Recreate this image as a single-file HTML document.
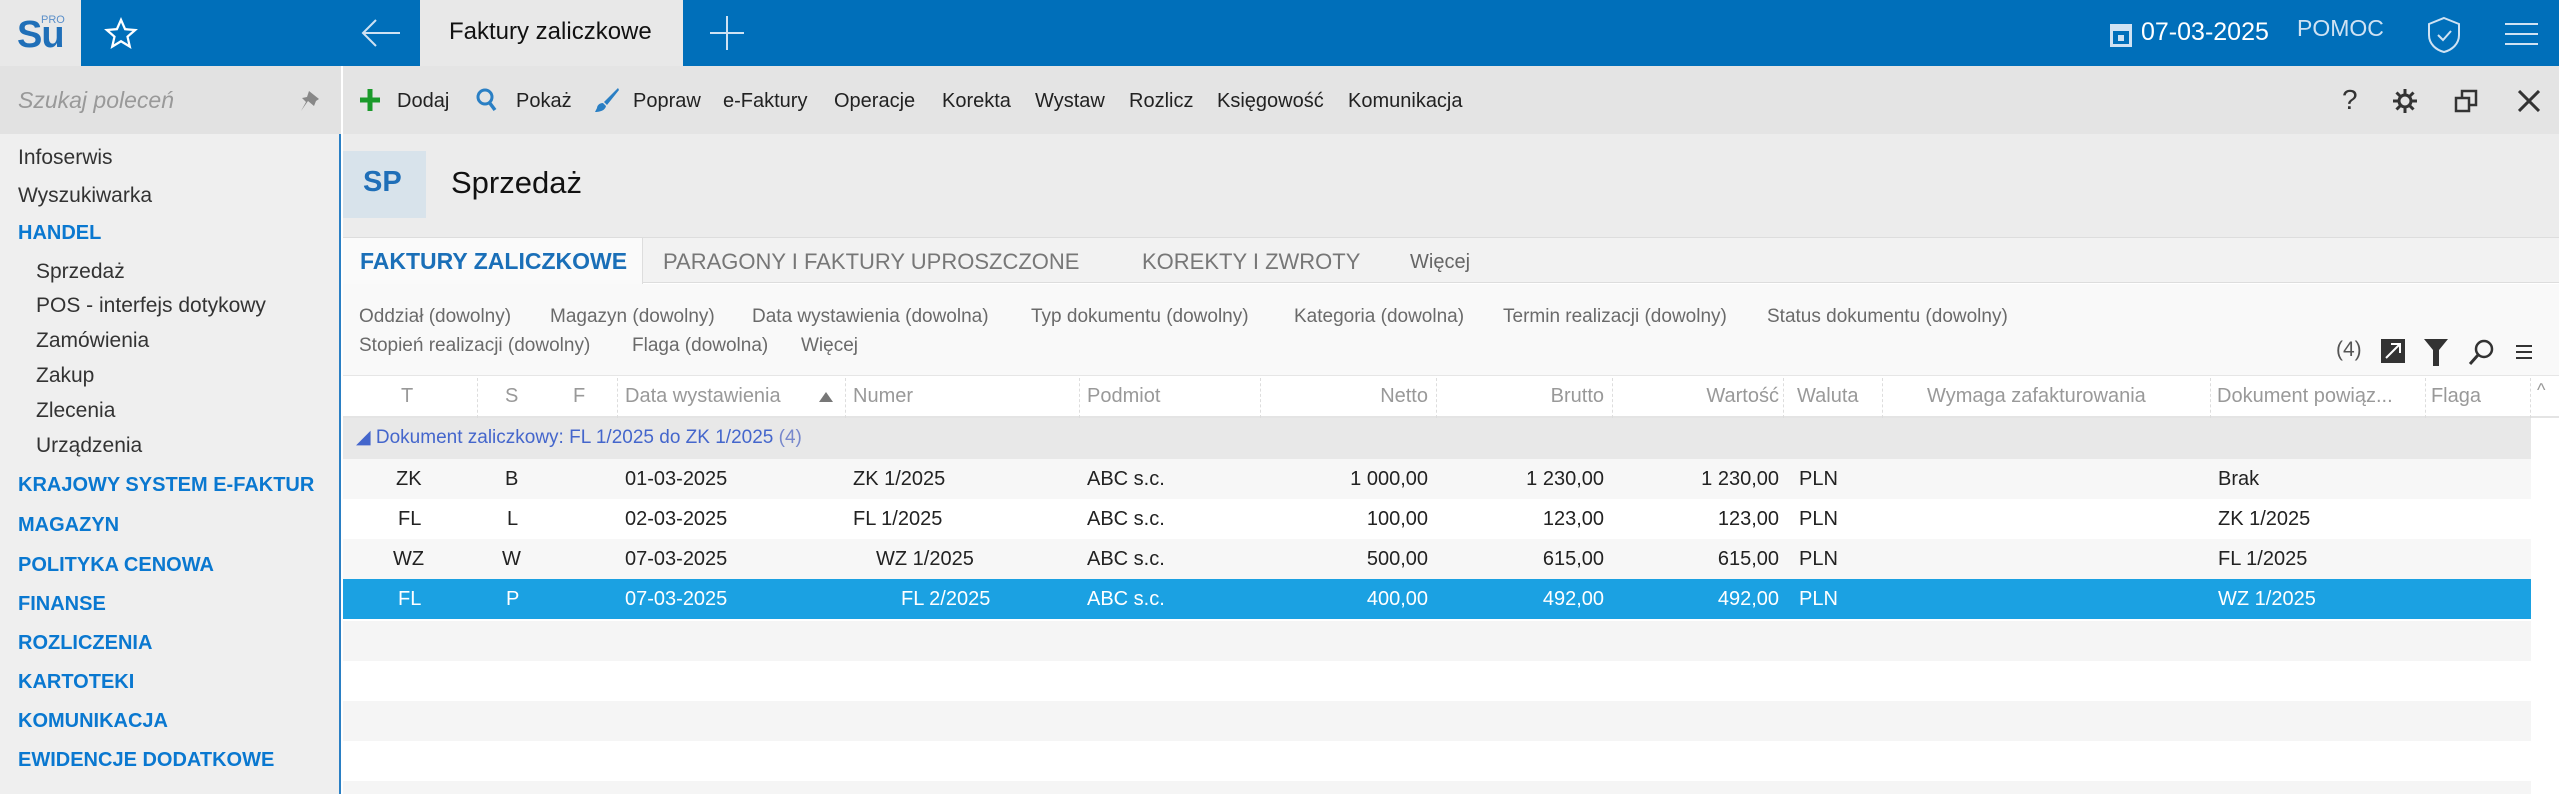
<!DOCTYPE html>
<html><head><meta charset="utf-8"><style>
*{margin:0;padding:0;box-sizing:border-box}
body{width:2559px;height:794px;overflow:hidden;position:relative;font-family:"Liberation Sans",sans-serif;background:#fff;color:#222}
.a{position:absolute;white-space:nowrap}
.top{left:0;top:0;width:2559px;height:66px;background:#006fba}
.sb{left:0;top:66px;width:341px;height:728px;background:#efefef;border-right:2px solid #2a7fc4}
.si{left:18px;font-size:21px;color:#333}
.sh{left:18px;font-size:20px;color:#0a78d0;font-weight:bold}
.sub{left:36px}
.tb{font-size:20px;color:#222;top:90px}
.fl{font-size:19px;color:#6a6a6a}
.hd{font-size:20px;color:#999;top:385px}
.c{font-size:20px;line-height:40px;height:40px}
.sep{position:absolute;top:378px;height:40px;border-left:1px dashed #ddd}
</style></head><body>
<div class="a top"></div>
<div class="a" style="left:0;top:0;width:81px;height:66px;background:#e8e8e8"></div>
<div class="a" style="left:17px;top:14px;font-size:38px;color:#1f6fb8;font-weight:bold;letter-spacing:-1px">Su</div>
<div class="a" style="left:41px;top:14px;font-size:11px;color:#5b8fc9">PRO</div>
<svg class="a" style="left:104px;top:17px" width="34" height="34" viewBox="0 0 24 24"><path d="M12 2l2.9 6.6 7.1.6-5.4 4.7 1.6 7-6.2-3.8-6.2 3.8 1.6-7L2 9.2l7.1-.6z" fill="none" stroke="#fff" stroke-width="1.6"/></svg>
<svg class="a" style="left:360px;top:16px" width="42" height="34" viewBox="0 0 42 34"><path d="M40 17H4M16 4L3 17l13 13" fill="none" stroke="#cfe2f3" stroke-width="2"/></svg>
<div class="a" style="left:420px;top:0;width:263px;height:66px;background:#e8e8e8"></div>
<div class="a" style="left:449px;top:18px;font-size:24px;color:#111">Faktury zaliczkowe</div>
<svg class="a" style="left:710px;top:16px" width="34" height="34"><path d="M17 0v34M0 17h34" stroke="#cfe2f3" stroke-width="2"/></svg>
<svg class="a" style="left:2109px;top:22px" width="24" height="26"><rect x="1" y="2" width="22" height="23" fill="#cfe2f3"/><rect x="4" y="9" width="16" height="13" fill="#006fba"/><rect x="9" y="13" width="6" height="6" fill="#cfe2f3"/></svg>
<div class="a" style="left:2141px;top:18px;font-size:25px;color:#fff">07-03-2025</div>
<div class="a" style="left:2297px;top:15px;font-size:23px;color:#cfe2f3">POMOC</div>
<svg class="a" style="left:2426px;top:16px" width="36" height="38" viewBox="0 0 36 38"><path d="M18 2l15 6v11c0 9-7 15-15 17C10 34 3 28 3 19V8z" fill="none" stroke="#cfe2f3" stroke-width="2"/><path d="M12 19l5 5 8-9" fill="none" stroke="#cfe2f3" stroke-width="2"/></svg>
<svg class="a" style="left:2505px;top:22px" width="33" height="24"><path d="M0 2h33M0 12h33M0 22h33" stroke="#cfe2f3" stroke-width="2"/></svg>

<div class="a sb"></div>
<div class="a" style="left:0;top:66px;width:341px;height:68px;background:#e2e2e2"></div>
<div class="a" style="left:18px;top:87px;font-size:23px;color:#999;font-style:italic">Szukaj poleceń</div>
<svg class="a" style="left:300px;top:90px" width="20" height="22" viewBox="0 0 20 22"><path d="M9 1l10 8-3 2-2 5-6-5-7 10 5-9-4-4 5-1z" fill="#888"/></svg>
<div class="a si" style="top:146px">Infoserwis</div>
<div class="a si" style="top:184px">Wyszukiwarka</div>
<div class="a sh" style="top:222px">HANDEL</div>
<div class="a si sub" style="top:260px">Sprzedaż</div>
<div class="a si sub" style="top:294px">POS - interfejs dotykowy</div>
<div class="a si sub" style="top:329px">Zamówienia</div>
<div class="a si sub" style="top:364px">Zakup</div>
<div class="a si sub" style="top:399px">Zlecenia</div>
<div class="a si sub" style="top:434px">Urządzenia</div>
<div class="a sh" style="top:474px">KRAJOWY SYSTEM E-FAKTUR</div>
<div class="a sh" style="top:514px">MAGAZYN</div>
<div class="a sh" style="top:554px">POLITYKA CENOWA</div>
<div class="a sh" style="top:593px">FINANSE</div>
<div class="a sh" style="top:632px">ROZLICZENIA</div>
<div class="a sh" style="top:671px">KARTOTEKI</div>
<div class="a sh" style="top:710px">KOMUNIKACJA</div>
<div class="a sh" style="top:749px">EWIDENCJE DODATKOWE</div>

<div class="a" style="left:343px;top:66px;width:2216px;height:68px;background:#e4e4e4"></div>
<svg class="a" style="left:360px;top:89px" width="20" height="22"><path d="M10 0v22M0 11h20" stroke="#1a9a2a" stroke-width="5"/></svg>
<div class="a tb" style="left:397px">Dodaj</div>
<svg class="a" style="left:476px;top:88px" width="22" height="24"><circle cx="9" cy="9" r="7" fill="none" stroke="#2a7fc4" stroke-width="3"/><path d="M13 14l6 8" stroke="#2a7fc4" stroke-width="3.5"/></svg>
<div class="a tb" style="left:516px">Pokaż</div>
<svg class="a" style="left:594px;top:87px" width="26" height="26"><path d="M24 1L10 15l3 3L25 3zM9 16c-4 0-6 3-6 5l-2 4c4 0 10-1 11-6z" fill="#2a7fc4"/></svg>
<div class="a tb" style="left:633px">Popraw</div>
<div class="a tb" style="left:723px">e-Faktury</div>
<div class="a tb" style="left:834px">Operacje</div>
<div class="a tb" style="left:942px">Korekta</div>
<div class="a tb" style="left:1035px">Wystaw</div>
<div class="a tb" style="left:1129px">Rozlicz</div>
<div class="a tb" style="left:1217px">Księgowość</div>
<div class="a tb" style="left:1348px">Komunikacja</div>
<div class="a" style="left:2342px;top:84px;font-size:28px;color:#333">?</div>
<svg class="a" style="left:2392px;top:88px" width="26" height="26" viewBox="0 0 26 26"><circle cx="13" cy="13" r="6" fill="none" stroke="#333" stroke-width="3"/><path d="M13 1v5M13 20v5M1 13h5M20 13h5M4.5 4.5l3.5 3.5M18 18l3.5 3.5M4.5 21.5L8 18M18 8l3.5-3.5" stroke="#333" stroke-width="3"/></svg>
<svg class="a" style="left:2454px;top:89px" width="24" height="24"><rect x="2" y="9" width="13" height="13" fill="none" stroke="#333" stroke-width="2.5"/><path d="M8 9V2h14v14h-7" fill="none" stroke="#333" stroke-width="2.5"/></svg>
<svg class="a" style="left:2518px;top:90px" width="22" height="22"><path d="M1 1l20 20M21 1L1 21" stroke="#333" stroke-width="3"/></svg>

<div class="a" style="left:343px;top:134px;width:2216px;height:103px;background:#ececec"></div>
<div class="a" style="left:343px;top:151px;width:83px;height:67px;background:#d8e3eb"></div>
<div class="a" style="left:363px;top:166px;font-size:29px;color:#1f6fb8;font-weight:bold">SP</div>
<div class="a" style="left:451px;top:165px;font-size:31px;color:#111">Sprzedaż</div>

<div class="a" style="left:343px;top:237px;width:2216px;height:46px;background:#f2f2f2;border-top:1px solid #ddd;border-bottom:1px solid #ddd"></div>
<div class="a" style="left:343px;top:237px;width:300px;height:47px;background:#fafafa;border-right:1px solid #ddd;border-top:1px solid #ddd"></div>
<div class="a" style="left:360px;top:248px;font-size:23px;color:#1a6fb8;font-weight:bold">FAKTURY ZALICZKOWE</div>
<div class="a" style="left:663px;top:249px;font-size:22px;color:#777">PARAGONY I FAKTURY UPROSZCZONE</div>
<div class="a" style="left:1142px;top:249px;font-size:22px;color:#777">KOREKTY I ZWROTY</div>
<div class="a" style="left:1410px;top:251px;font-size:20px;color:#666">Więcej</div>

<div class="a" style="left:343px;top:284px;width:2216px;height:91px;background:#f9f9f9"></div>
<div class="a fl" style="left:359px;top:306px">Oddział (dowolny)</div>
<div class="a fl" style="left:550px;top:306px">Magazyn (dowolny)</div>
<div class="a fl" style="left:752px;top:306px">Data wystawienia (dowolna)</div>
<div class="a fl" style="left:1031px;top:306px">Typ dokumentu (dowolny)</div>
<div class="a fl" style="left:1294px;top:306px">Kategoria (dowolna)</div>
<div class="a fl" style="left:1503px;top:306px">Termin realizacji (dowolny)</div>
<div class="a fl" style="left:1767px;top:306px">Status dokumentu (dowolny)</div>
<div class="a fl" style="left:359px;top:335px">Stopień realizacji (dowolny)</div>
<div class="a fl" style="left:632px;top:335px">Flaga (dowolna)</div>
<div class="a fl" style="left:801px;top:335px">Więcej</div>
<div class="a" style="left:2336px;top:338px;font-size:21px;color:#555">(4)</div>
<svg class="a" style="left:2381px;top:339px" width="24" height="24"><rect width="24" height="24" fill="#333"/><path d="M5 19L19 5M10 5h9v9" fill="none" stroke="#fff" stroke-width="2"/></svg>
<svg class="a" style="left:2424px;top:339px" width="24" height="27"><path d="M0 0h24L15 11v16H9V11z" fill="#333"/></svg>
<svg class="a" style="left:2468px;top:339px" width="26" height="27"><circle cx="16" cy="10" r="8" fill="none" stroke="#333" stroke-width="2.5"/><path d="M10 16L2 25" stroke="#333" stroke-width="3"/></svg>
<svg class="a" style="left:2516px;top:344px" width="16" height="16"><path d="M0 2h16M0 8h16M0 14h16" stroke="#333" stroke-width="2"/></svg>

<div class="a" style="left:343px;top:375px;width:2216px;height:43px;background:#fff;border-top:1px solid #e6e6e6;border-bottom:2px solid #e4e4e4"></div>
<div class="sep" style="left:477px"></div><div class="sep" style="left:617px"></div><div class="sep" style="left:845px"></div><div class="sep" style="left:1079px"></div><div class="sep" style="left:1260px"></div><div class="sep" style="left:1436px"></div><div class="sep" style="left:1612px"></div><div class="sep" style="left:1783px"></div><div class="sep" style="left:1882px"></div><div class="sep" style="left:2210px"></div><div class="sep" style="left:2425px"></div><div class="sep" style="left:2530px"></div>
<div class="a hd" style="left:401px">T</div>
<div class="a hd" style="left:505px">S</div>
<div class="a hd" style="left:573px">F</div>
<div class="a hd" style="left:625px">Data wystawienia</div>
<svg class="a" style="left:819px;top:392px" width="14" height="10"><path d="M7 0l7 10H0z" fill="#777"/></svg>
<div class="a hd" style="left:853px">Numer</div>
<div class="a hd" style="left:1087px">Podmiot</div>
<div class="a hd" style="right:1131px">Netto</div>
<div class="a hd" style="right:955px">Brutto</div>
<div class="a hd" style="right:780px">Wartość</div>
<div class="a hd" style="left:1797px">Waluta</div>
<div class="a hd" style="left:1927px">Wymaga zafakturowania</div>
<div class="a hd" style="left:2217px">Dokument powiąz...</div>
<div class="a hd" style="right:78px">Flaga</div>
<div class="a" style="left:2537px;top:380px;font-size:18px;color:#999">^</div>

<div class="a" style="left:343px;top:418px;width:2188px;height:41px;background:#e8e8e8"></div>
<div class="a c" style="left:356px;top:418px;color:#4466cc;font-size:19px">◢ Dokument zaliczkowy: FL 1/2025 do ZK 1/2025 <span style="color:#7788cc">(4)</span></div>

<div class="a" style="left:343px;top:459px;width:2188px;height:40px;background:#f7f7f7"></div>
<div class="a" style="left:343px;top:539px;width:2188px;height:40px;background:#f7f7f7"></div>
<div class="a" style="left:343px;top:579px;width:2188px;height:40px;background:#1ba1e2"></div>
<div class="a" style="left:343px;top:621px;width:2188px;height:40px;background:#f5f5f5"></div>
<div class="a" style="left:343px;top:701px;width:2188px;height:40px;background:#f5f5f5"></div>
<div class="a" style="left:343px;top:781px;width:2188px;height:13px;background:#f5f5f5"></div>

<div class="a c" style="left:396px;top:459px">ZK</div><div class="a c" style="left:505px;top:459px">B</div><div class="a c" style="left:625px;top:459px">01-03-2025</div><div class="a c" style="left:853px;top:459px">ZK 1/2025</div><div class="a c" style="left:1087px;top:459px">ABC s.c.</div><div class="a c" style="right:1131px;top:459px">1 000,00</div><div class="a c" style="right:955px;top:459px">1 230,00</div><div class="a c" style="right:780px;top:459px">1 230,00</div><div class="a c" style="left:1799px;top:459px">PLN</div><div class="a c" style="left:2218px;top:459px">Brak</div>
<div class="a c" style="left:398px;top:499px">FL</div><div class="a c" style="left:507px;top:499px">L</div><div class="a c" style="left:625px;top:499px">02-03-2025</div><div class="a c" style="left:853px;top:499px">FL 1/2025</div><div class="a c" style="left:1087px;top:499px">ABC s.c.</div><div class="a c" style="right:1131px;top:499px">100,00</div><div class="a c" style="right:955px;top:499px">123,00</div><div class="a c" style="right:780px;top:499px">123,00</div><div class="a c" style="left:1799px;top:499px">PLN</div><div class="a c" style="left:2218px;top:499px">ZK 1/2025</div>
<div class="a c" style="left:393px;top:539px">WZ</div><div class="a c" style="left:502px;top:539px">W</div><div class="a c" style="left:625px;top:539px">07-03-2025</div><div class="a c" style="left:876px;top:539px">WZ 1/2025</div><div class="a c" style="left:1087px;top:539px">ABC s.c.</div><div class="a c" style="right:1131px;top:539px">500,00</div><div class="a c" style="right:955px;top:539px">615,00</div><div class="a c" style="right:780px;top:539px">615,00</div><div class="a c" style="left:1799px;top:539px">PLN</div><div class="a c" style="left:2218px;top:539px">FL 1/2025</div>
<div style="color:#fff">
<div class="a c" style="left:398px;top:579px">FL</div><div class="a c" style="left:506px;top:579px">P</div><div class="a c" style="left:625px;top:579px">07-03-2025</div><div class="a c" style="left:901px;top:579px">FL 2/2025</div><div class="a c" style="left:1087px;top:579px">ABC s.c.</div><div class="a c" style="right:1131px;top:579px">400,00</div><div class="a c" style="right:955px;top:579px">492,00</div><div class="a c" style="right:780px;top:579px">492,00</div><div class="a c" style="left:1799px;top:579px">PLN</div><div class="a c" style="left:2218px;top:579px">WZ 1/2025</div>
</div>
</body></html>
